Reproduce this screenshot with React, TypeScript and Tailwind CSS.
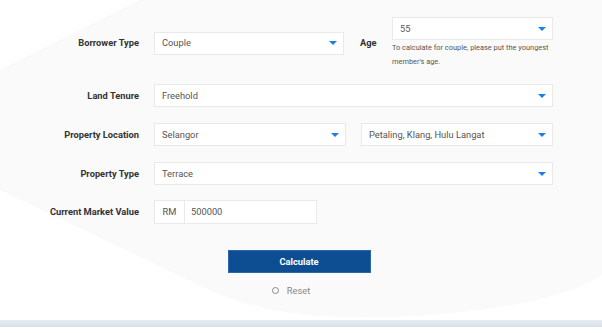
import React from 'react'

function Arrow() {
  return (
    <svg width="8" height="4" viewBox="0 0 8 4" className="shrink-0">
      <path d="M0 0 L8 0 L4 4 Z" fill="#1a7fe6" />
    </svg>
  )
}

function Select({ value, className = '' }: { value: string; className?: string }) {
  return (
    <div className={`h-[23px] bg-white border border-[#e9e9e9] flex items-center pl-[7px] pr-[6px] ${className}`}>
      <span className="flex-1 text-[9.3px] text-[#555]">{value}</span>
      <Arrow />
    </div>
  )
}

function Label({ children }: { children: React.ReactNode }) {
  return <div className="w-[139px] shrink-0 text-right text-[9.3px] font-bold text-[#333] mr-[15px]">{children}</div>
}

export default function App() {
  return (
    <div className="w-full h-[333px] overflow-hidden bg-white flex flex-col" style={{ fontFamily: 'Roboto, "Liberation Sans", sans-serif' }}>
      <div className="relative h-[320px] shrink-0">
        <svg className="absolute inset-0" width="602" height="320" viewBox="0 0 602 320">
          <path d="M0 70 L140 0 L602 0 L602 275 C560 305 430 322 320 316 C270 312 235 302 205 288 L0 190 Z" fill="#fafafa" />
        </svg>
        <div className="relative flex flex-col pt-[17px]">
          <div className="flex items-center">
            <Label>Borrower Type</Label>
            <Select value="Couple" className="w-[190px]" />
            <div className="w-[48px] pl-[16px] text-[9.3px] font-bold text-[#333]">Age</div>
            <div className="w-[161px] flex flex-col">
              <Select value="55" />
              <div className="mt-[1px] text-[7.4px] leading-[14px] text-[#555]">
                To calculate for couple, please put the youngest member's age.
              </div>
            </div>
          </div>

          <div className="flex items-center mt-[15px]">
            <Label>Land Tenure</Label>
            <Select value="Freehold" className="w-[399px]" />
          </div>

          <div className="flex items-center mt-[16px]">
            <Label>Property Location</Label>
            <div className="w-[399px] flex gap-[15px]">
              <Select value="Selangor" className="flex-1" />
              <Select value="Petaling, Klang, Hulu Langat" className="flex-1" />
            </div>
          </div>

          <div className="flex items-center mt-[16px]">
            <Label>Property Type</Label>
            <Select value="Terrace" className="w-[399px]" />
          </div>

          <div className="flex items-center mt-[15px]">
            <Label>Current Market Value</Label>
            <div className="flex h-[24px]">
              <div className="w-[31px] bg-white border border-[#e9e9e9] flex items-center justify-center text-[9.3px] text-[#555]">RM</div>
              <div className="w-[132px] bg-white border border-l-0 border-[#e9e9e9] flex items-center pl-[6px] text-[9.3px] text-[#555]">500000</div>
            </div>
          </div>

          <div className="flex justify-center mt-[26px] pr-[4px]">
            <button className="w-[143px] h-[23px] bg-[#0d4e93] border border-[#2a68ad] text-white text-[9.3px] font-bold">
              Calculate
            </button>
          </div>

          <div className="flex justify-center items-center gap-[8px] mt-[11px] pr-[20px]">
            <span className="w-[7px] h-[7px] rounded-full border border-[#888]" />
            <span className="text-[9.3px] text-[#888]">Reset</span>
          </div>
        </div>
      </div>
      <div className="h-[7px] shrink-0 bg-gradient-to-b from-[#e8edf3] to-[#d6dfea]" />
      <div className="flex-1 bg-white" />
    </div>
  )
}
